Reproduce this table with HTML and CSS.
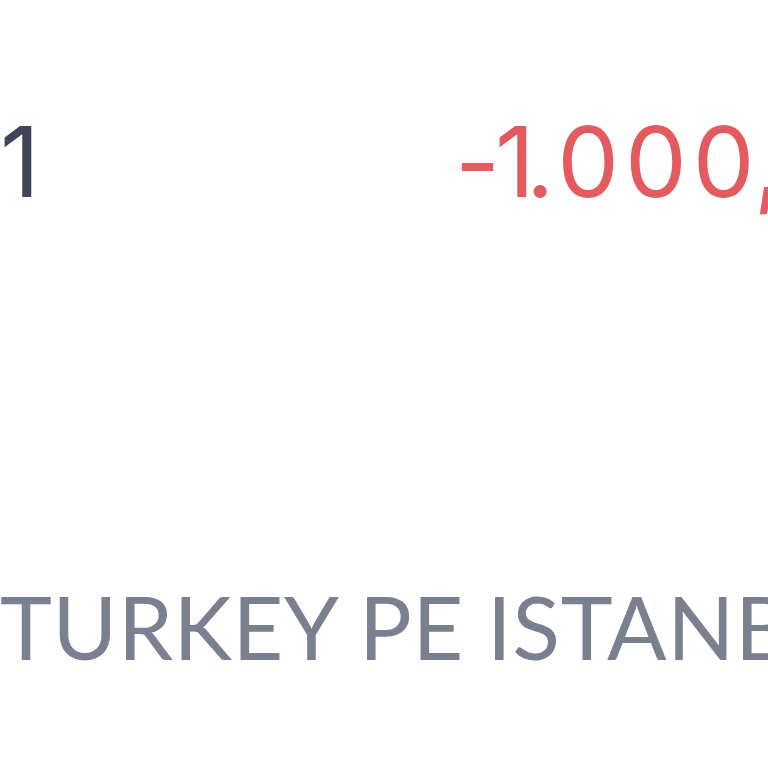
FILE: index.html
```html
<!DOCTYPE html>
<html>
<head>
<meta charset="utf-8">
<link rel="stylesheet" href="styles.css">
</head>
<body>
<div class="page">
  <div class="row">
    <span class="qty">1</span>
    <span class="amount"><span class="minus">-</span><span class="one">1</span><span class="dot">.</span>00<span class="last">0</span>,00</span>
  </div>
  <div class="label">TURKEY PE ISTANBUL</div>
</div>
</body>
</html>
```
FILE: styles.css
```css
html, body {
  margin: 0;
  padding: 0;
  background: #ffffff;
  overflow: hidden;
}
.page {
  width: 768px;
  height: 768px;
  overflow: hidden;
  font-family: Inter, "Noto Sans", sans-serif;
  display: flex;
  flex-direction: column;
}
.row {
  margin-top: 113px;
  display: flex;
  white-space: nowrap;
  font-size: 98px;
  line-height: 1;
}
.qty {
  width: 27px;
  text-align: right;
  color: #3e4558;
  flex: none;
}
.amount {
  margin-left: 428px;
  color: #e45b5f;
  letter-spacing: 6px;
  flex: none;
}
.minus { letter-spacing: -5px; }
.one { letter-spacing: -9px; }
.dot { letter-spacing: 3px; }
.last { letter-spacing: -1px; }
.label {
  margin-top: 371px;
  font-family: Lato, sans-serif;
  font-size: 88px;
  letter-spacing: 0.6px;
  line-height: 1;
  color: #7a8090;
  white-space: nowrap;
}
```
